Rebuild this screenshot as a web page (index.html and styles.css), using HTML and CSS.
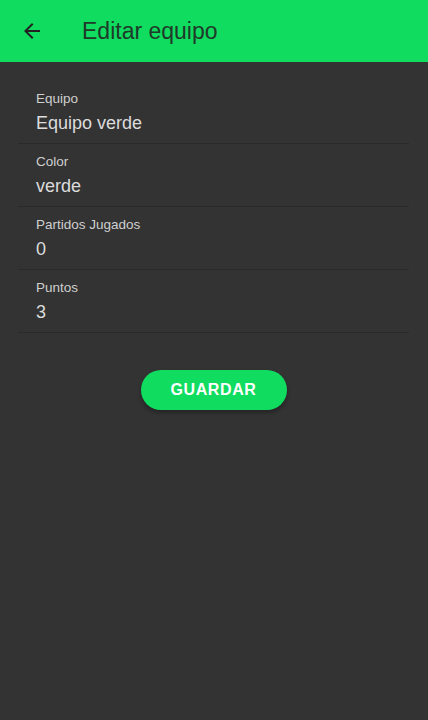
FILE: index.html
```html
<!DOCTYPE html>
<html>
<head>
<meta charset="utf-8">
<link rel="stylesheet" href="styles.css">
</head>
<body>
<header class="toolbar">
  <button class="back" aria-label="Atrás">
    <svg width="24" height="24" viewBox="0 0 24 24"><path d="M20 11H7.83l5.59-5.59L12 4l-8 8 8 8 1.41-1.41L7.83 13H20v-2z" fill="#222"/></svg>
  </button>
  <h1 class="title">Editar equipo</h1>
</header>
<main class="content">
  <div class="list">
    <div class="item"><span class="label">Equipo</span><span class="value">Equipo verde</span></div>
    <div class="item"><span class="label">Color</span><span class="value">verde</span></div>
    <div class="item"><span class="label">Partidos Jugados</span><span class="value">0</span></div>
    <div class="item"><span class="label">Puntos</span><span class="value">3</span></div>
  </div>
  <div class="actions">
    <button class="save">GUARDAR</button>
  </div>
</main>
</body>
</html>
```
FILE: styles.css
```css
html, body {
  margin: 0;
  padding: 0;
  height: 100%;
  background: #333333;
  font-family: "Liberation Sans", Arial, sans-serif;
}
.toolbar {
  height: 62px;
  background: #10dc60;
  display: flex;
  align-items: center;
  padding: 0 0 0 20px;
  box-sizing: border-box;
}
.back {
  background: none;
  border: 0;
  padding: 0;
  width: 24px;
  height: 24px;
  display: flex;
}
.title {
  margin: 0 0 0 38px;
  font-family: "Liberation Sans", Arial, sans-serif;
  font-weight: 400;
  font-size: 23px;
  color: #1f3a28;
  letter-spacing: 0;
}
.content {
  padding: 19px 19px 0 18px;
}
.list {
  display: flex;
  flex-direction: column;
}
.item {
  display: flex;
  flex-direction: column;
  border-bottom: 1px solid #2a2a2a;
  padding: 10px 0 9px 18px;
  height: 43px;
}
.label {
  font-size: 13.5px;
  line-height: 16px;
  color: #cfcfcf;
}
.value {
  font-size: 18px;
  line-height: 22px;
  color: #dcdcdc;
  margin-top: 5px;
}
.actions {
  display: flex;
  justify-content: center;
  padding-top: 37px;
}
.save {
  width: 146px;
  height: 40px;
  border: 0;
  border-radius: 20px;
  background: #10dc60;
  color: #fff;
  font-family: "Liberation Sans", Arial, sans-serif;
  font-weight: 700;
  font-size: 16px;
  letter-spacing: 0.6px;
  box-shadow: 0 3px 4px rgba(0,0,0,0.3);
}
```
